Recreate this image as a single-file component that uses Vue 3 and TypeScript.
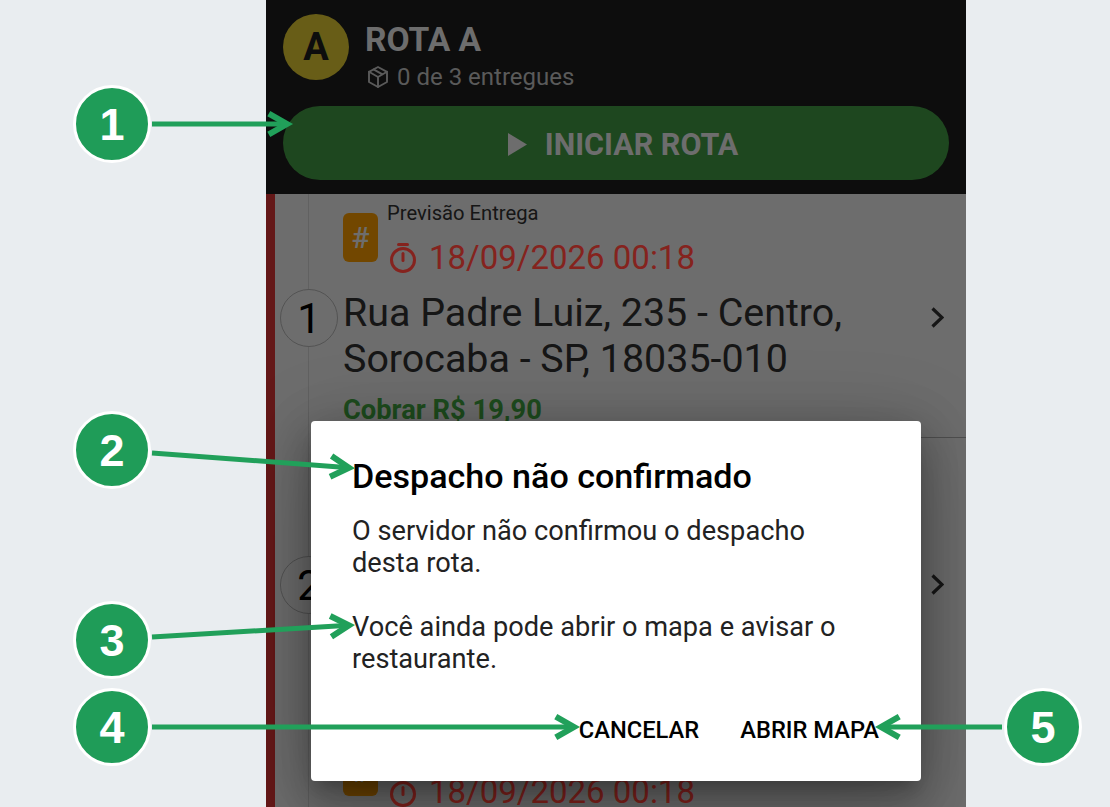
<script setup lang="ts">
interface Stop { n: number; address: string[]; charge: string }
const stops: Stop[] = [
  { n: 1, address: ['Rua Padre Luiz, 235 - Centro,', 'Sorocaba - SP, 18035-010'], charge: 'Cobrar R$ 19,90' },
  { n: 2, address: ['Rua Padre Luiz, 235 - Centro,', 'Sorocaba - SP, 18035-010'], charge: 'Cobrar R$ 19,90' },
  { n: 3, address: ['Rua Padre Luiz, 235 - Centro,', 'Sorocaba - SP, 18035-010'], charge: 'Cobrar R$ 19,90' },
]
interface Note { n: number; cx: number; cy: number; x1: number; y1: number; x2: number; y2: number }
const notes: Note[] = [
  { n: 1, cx: 112, cy: 124, x1: 152, y1: 124, x2: 287, y2: 124 },
  { n: 2, cx: 112, cy: 450, x1: 152, y1: 453, x2: 349, y2: 467.700 },
  { n: 3, cx: 112, cy: 640, x1: 152, y1: 637, x2: 349, y2: 625.300 },
  { n: 4, cx: 112, cy: 727, x1: 152, y1: 727, x2: 574, y2: 727 },
  { n: 5, cx: 1043, cy: 727, x1: 1002, y1: 727, x2: 881, y2: 727 },
]
function head(a: Note): string {
  const ang = Math.atan2(a.y2 - a.y1, a.x2 - a.x1)
  const pt = (d: number) => {
    const t = ang + Math.PI + d
    return `${a.x2 + 21 * Math.cos(t)},${a.y2 + 21 * Math.sin(t)}`
  }
  return `${pt(0.52)} ${a.x2},${a.y2} ${pt(-0.52)}`
}
</script>

<template>
  <div class="stage">
    <div class="phone">
      <header class="top">
        <div class="route">
          <div class="avatar">A</div>
          <div class="route-text">
            <div class="route-name">ROTA A</div>
            <div class="route-sub">
              <svg class="box" viewBox="0 0 24 24" fill="none" stroke="currentColor" stroke-width="1.9" stroke-linejoin="round" stroke-linecap="round">
                <path d="M12 2 21 6.800V17L12 22 3 17V6.800Z" />
                <path d="M3 6.800 12 12 21 6.800M12 12V22M7.500 4.400 16.500 9.400" />
              </svg>
              <span>0 de 3 entregues</span>
            </div>
          </div>
        </div>
        <button class="start">
          <svg class="play" viewBox="0 0 19 23"><path d="M0 0 19 11.500 0 23Z" fill="currentColor" /></svg>
          <span>INICIAR ROTA</span>
        </button>
      </header>

      <main class="list">
        <div class="list-inner">
          <section v-for="s in stops" :key="s.n" class="card">
            <div class="rail">
              <div class="num">{{ s.n }}</div>
            </div>
            <div class="body">
              <div class="meta">
                <div class="tag">#</div>
                <div class="when">
                  <div class="label">Previsão Entrega</div>
                  <div class="date">
                    <svg class="timer" viewBox="0 0 26 30" fill="none" stroke="currentColor" stroke-width="3" stroke-linecap="round">
                      <path d="M8.500 1.500H17.500" />
                      <circle cx="13" cy="17" r="11.500" />
                      <path d="M13 10.500V17.500" />
                    </svg>
                    <span>18/09/2026 00:18</span>
                  </div>
                </div>
              </div>
              <div class="address">
                <div v-for="line in s.address" :key="line">{{ line }}</div>
              </div>
              <div class="charge">{{ s.charge }}</div>
            </div>
            <svg class="chev" viewBox="0 0 13 21" fill="none" stroke="currentColor" stroke-width="3.200">
              <path d="M1.500 1.500 11 10.500 1.500 19.500" />
            </svg>
          </section>
        </div>
      </main>

      <div class="scrim">
        <div class="dialog">
          <h2 class="title">Despacho não confirmado</h2>
          <p class="message">O servidor não confirmou o despacho<br />desta rota.<br /><br />Você ainda pode abrir o mapa e avisar o<br />restaurante.</p>
          <div class="actions">
            <button class="action">CANCELAR</button>
            <button class="action">ABRIR MAPA</button>
          </div>
        </div>
      </div>
    </div>

    <svg class="notes" viewBox="0 0 1110 807">
      <g v-for="a in notes" :key="a.n">
        <line :x1="a.x1" :y1="a.y1" :x2="a.x2" :y2="a.y2" class="arrow" />
        <polyline :points="head(a)" class="arrow head" />
        <circle :cx="a.cx" :cy="a.cy" r="37.500" class="dot" />
        <text :x="a.cx" :y="a.cy + 16" class="digit">{{ a.n }}</text>
      </g>
    </svg>
  </div>
</template>

<style>
html, body { margin: 0; background: #e9edf0; }
</style>

<style scoped>
.stage {
  position: relative;
  width: 1110px;
  height: 807px;
  overflow: hidden;
  box-sizing: border-box;
  padding-left: 266px;
  background: #e9edf0;
  font-family: Roboto, "Liberation Sans", sans-serif;
}
.phone {
  position: relative;
  width: 700px;
  height: 807px;
  overflow: hidden;
  display: flex;
  flex-direction: column;
  background: #a8a8a8;
}
.top {
  position: relative;
  z-index: 1;
  height: 194px;
  flex: none;
  box-sizing: border-box;
  padding: 14px 17px 0;
  background: #141414;
  color: #a8a8a8;
}
.route { display: flex; gap: 16px; height: 66px; }
.avatar {
  width: 66px;
  height: 66px;
  border-radius: 50%;
  background: #a09024;
  color: #141414;
  font-size: 38px;
  font-weight: 700;
  display: flex;
  align-items: center;
  justify-content: center;
}
.route-text { display: flex; flex-direction: column; }
.route-name { font-size: 33.600px; font-weight: 700; line-height: 48px; margin-top: 2px; }
.route-sub { display: flex; align-items: center; gap: 7px; font-size: 24px; line-height: 30px; margin-left: 1px; margin-top: -2px; color: #8a8a8a; }
.box { width: 24px; height: 24px; }
.start {
  margin-top: 26px;
  width: 666px;
  height: 74px;
  border: 0;
  border-radius: 37px;
  background: #2f6e30;
  color: #a8a8a8;
  font: 700 30.500px Roboto, sans-serif;
  display: flex;
  align-items: center;
  justify-content: center;
  gap: 18px;
  padding: 2px 0 0 14px;
}
.play { width: 19px; height: 23px; }
.list {
  flex: 1;
  min-height: 0;
  overflow: hidden;
  border-left: 9px solid #9a2626;
}
.list-inner { margin-top: -23px; }
.card {
  position: relative;
  height: 267px;
  box-sizing: border-box;
  display: flex;
  padding-right: 22px;
}
.card:first-child::after {
  content: "";
  position: absolute;
  left: 68px;
  right: 0;
  bottom: 0;
  height: 1px;
  background: #7a7a7a;
}
.rail { position: relative; width: 68px; flex: none; }
.rail::before {
  content: "";
  position: absolute;
  left: 33px;
  top: 0;
  bottom: 0;
  width: 1px;
  background: #969696;
}
.num {
  position: absolute;
  left: 5px;
  top: 118px;
  width: 58px;
  height: 58px;
  box-sizing: border-box;
  border: 1px solid #808080;
  border-radius: 50%;
  background: #a8a8a8;
  color: #000;
  font-size: 42px;
  display: flex;
  align-items: center;
  justify-content: center;
}
.body { flex: 1; min-width: 0; padding-top: 31px; color: #222; }
.meta { display: flex; gap: 9px; height: 75px; }
.tag {
  margin-top: 11px;
  width: 35px;
  height: 49px;
  border-radius: 6px;
  background: #b06e00;
  color: #a8a8a8;
  font-size: 30px;
  font-weight: 500;
  display: flex;
  align-items: center;
  justify-content: center;
}
.label { font-size: 20.200px; line-height: 23px; margin-bottom: 13px; }
.date { display: flex; align-items: center; gap: 13px; font-size: 33px; line-height: 40px; color: #cc362f; margin-left: 3px; }
.timer { width: 26px; height: 30px; }
.address { margin-top: 13px; font-size: 39.400px; line-height: 46px; }
.charge { margin-top: 12px; font-size: 27.300px; font-weight: 700; line-height: 32px; color: #2f762f; }
.chev { flex: none; width: 13px; height: 21px; margin-top: 136px; color: #222; }
.scrim {
  position: absolute;
  inset: 0;
  z-index: 2;
  background: rgba(0, 0, 0, 0.35);
  display: flex;
  justify-content: center;
  align-items: flex-start;
  padding-top: 421px;
  box-sizing: border-box;
}
.dialog {
  width: 610px;
  height: 360px;
  box-sizing: border-box;
  padding: 35px 42px 0 41px;
  background: #fff;
  border-radius: 4px;
  box-shadow: 0 11px 15px -7px rgba(0, 0, 0, 0.2), 0 24px 38px 3px rgba(0, 0, 0, 0.14), 0 9px 46px 8px rgba(0, 0, 0, 0.12), 0 20px 90px rgba(0, 0, 0, 0.22);
}
.title { margin: 0; font-size: 34.100px; font-weight: 500; line-height: 40px; color: #000; }
.message { margin: 19px 0 0; font-size: 27.200px; line-height: 32px; color: #222; }
.actions { display: flex; justify-content: flex-end; gap: 41px; margin-top: 40px; }
.action {
  border: 0;
  padding: 0;
  background: none;
  color: #000;
  font: 500 23.700px/30px Roboto, sans-serif;
}
.notes {
  position: absolute;
  left: 0;
  top: 0;
  width: 1110px;
  height: 807px;
  z-index: 3;
  pointer-events: none;
}
.arrow { fill: none; stroke: #21a05a; stroke-width: 5; }
.head { stroke-width: 6; }
.dot { fill: #1f9c58; stroke: #fff; stroke-width: 3; }
.digit {
  fill: #fff;
  font: 700 45px "Liberation Sans", sans-serif;
  text-anchor: middle;
}
</style>
